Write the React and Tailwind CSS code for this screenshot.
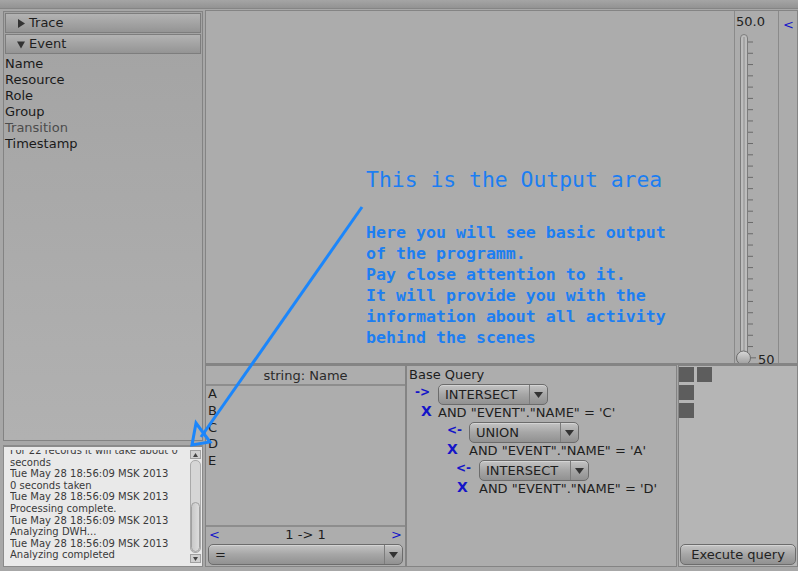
import React from 'react';

const blue = 'text-[#1414c8]';

const Caret = () => (
  <svg width="9" height="6" viewBox="0 0 9 6">
    <path d="M0 0H9L4.5 6Z" fill="#333" />
  </svg>
);

const Combo = ({ label, className = '' }) => (
  <div
    className={`flex items-stretch rounded-[5px] border border-[#6c6c6c] bg-gradient-to-b from-[#c4c4c4] via-[#a6a6a6] to-[#919191] shadow-[inset_0_1px_0_#d4d4d4] ${className}`}
  >
    <span className="flex-1 flex items-center pl-[6px] text-[13px] text-[#1e1e1e]">{label}</span>
    <span className="w-[18px] flex items-center justify-center border-l border-[#7c7c7c]">
      <Caret />
    </span>
  </div>
);

const Header = ({ open, label }) => (
  <div className="h-[20px] mx-[1px] mt-[1px] flex items-center gap-[4px] pl-[11px] border border-[#7d7d7d] bg-gradient-to-b from-[#b3b3b3] to-[#949494] text-[13px] text-[#1e1e1e]">
    <svg width="8" height="9" viewBox="0 0 8 9">
      {open ? <path d="M0 1.5H8L4 8.5Z" fill="#333" /> : <path d="M1 0V9L8 4.5Z" fill="#333" />}
    </svg>
    <span>{label}</span>
  </div>
);

const fields = ['Name', 'Resource', 'Role', 'Group', 'Transition', 'Timestamp'];

const logLines = [
  'For 22 records it will take about 0',
  'seconds',
  'Tue May 28 18:56:09 MSK 2013',
  '0 seconds taken',
  'Tue May 28 18:56:09 MSK 2013',
  'Processing complete.',
  'Tue May 28 18:56:09 MSK 2013',
  'Analyzing DWH...',
  'Tue May 28 18:56:09 MSK 2013',
  'Analyzing completed',
];

const outputLines = [
  'Here you will see basic output',
  'of the programm.',
  'Pay close attention to it.',
  'It will provide you with the',
  'information about all activity',
  'behind the scenes',
];

const Slider = () => {
  const ticks = [];
  for (let i = 0; i <= 28; i++) ticks.push(41 + i * 11.28);
  return (
    <svg width="44" height="352" viewBox="0 0 44 352" className="absolute left-0 top-0">
      <rect x="5.5" y="23.5" width="7" height="331" rx="3.5" fill="#bdbdbd" stroke="#7c7c7c" />
      <line x1="9" y1="26" x2="9" y2="350" stroke="#8e8e8e" />
      {ticks.map((y, i) => (
        <line key={i} x1="13" y1={y - 10} x2={i === 28 ? 21 : 18} y2={y - 10} stroke="#6a6a6a" />
      ))}
      <circle cx="8.5" cy="347" r="7" fill="url(#knob)" stroke="#6c6c6c" />
      <defs>
        <linearGradient id="knob" x1="0" y1="0" x2="0" y2="1">
          <stop offset="0" stopColor="#d8d8d8" />
          <stop offset="1" stopColor="#9a9a9a" />
        </linearGradient>
      </defs>
    </svg>
  );
};

const QueryLevel = ({ arrow, arrowPad, comboPad, xPad, op, value }) => (
  <div className="flex flex-col mt-[1px]">
    <div className="flex items-center h-[21px]">
      <span className={`${blue} font-bold text-[12px] leading-none -mt-[6px]`} style={{ marginLeft: arrowPad, width: comboPad - arrowPad }}>
        {arrow}
      </span>
      <Combo label={op} className="w-[110px] h-[21px]" />
    </div>
    <div className="flex items-center h-[16px]">
      <span className={`${blue} font-bold text-[14px] leading-none -mt-[4px]`} style={{ marginLeft: xPad, width: comboPad - xPad }}>
        X
      </span>
      <span className="text-[13px] text-[#1e1e1e]">AND "EVENT"."NAME" = '{value}'</span>
    </div>
  </div>
);

export default function App() {
  return (
    <div className="relative w-[798px] h-[571px] overflow-hidden flex flex-col bg-[#a7a7a7] font-['DejaVu_Sans','Liberation_Sans',sans-serif] text-[#1e1e1e]">
      <div className="h-[9px] bg-gradient-to-b from-[#a5a5a5] to-[#939393] border-b border-[#858585]" />

      <div className="flex flex-1 min-h-0">
        {/* left column */}
        <div className="w-[203px] flex flex-col pl-[3px] pt-[2px] pb-[4px]">
          <div className="h-[430px] flex flex-col border border-[#838383] bg-gradient-to-b from-[#a3a3a3] to-[#b1b1b1]">
            <Header label="Trace" />
            <Header open label="Event" />
            <div className="pt-[2px] pl-[1px] flex flex-col text-[13px] leading-[16px]">
              {fields.map((f) => (
                <span key={f} className={f === 'Transition' ? 'text-[#4c4c4c]' : 'text-[#1a1a1a]'}>
                  {f}
                </span>
              ))}
            </div>
          </div>
          <div className="h-[4px]" />
          <div className="flex-1 flex border border-[#8a8a8a] border-t-[2px] bg-[#e9e9e9] min-h-0">
            <div className="flex-1 flex flex-col pt-[3px] pl-[6px] min-w-0">
              <div className="flex-1 overflow-hidden">
                <div className="-mt-[5px] flex flex-col text-[10px] leading-[11.6px] text-[#3a3a3a] whitespace-nowrap">
                  {logLines.map((l, i) => (
                    <span key={i}>{l}</span>
                  ))}
                </div>
              </div>
            </div>
            <div className="w-[11px] mr-[1px] flex flex-col py-[3px] gap-[1px]">
              <div className="h-[9px] flex items-center justify-center border border-[#a0a0a0] bg-[#d0d0d0]">
                <svg width="5" height="4" viewBox="0 0 5 4"><path d="M0 4H5L2.5 0Z" fill="#444" /></svg>
              </div>
              <div className="flex-1 flex flex-col rounded-[5px] border border-[#a9a9a9] bg-[#d6d6d6]">
                <div className="flex-1" />
                <div className="h-[50px] rounded-[5px] border border-[#a0a0a0] bg-gradient-to-r from-[#c9c9c9] to-[#dcdcdc]" />
              </div>
              <div className="h-[9px] flex items-center justify-center border border-[#a0a0a0] bg-[#d0d0d0]">
                <svg width="5" height="4" viewBox="0 0 5 4"><path d="M0 0H5L2.5 4Z" fill="#444" /></svg>
              </div>
            </div>
          </div>
        </div>

        <div className="w-[2px]" />

        {/* right column */}
        <div className="flex-1 flex flex-col pt-[1px]">
          <div className="h-[355px] flex border border-[#848484] border-b-[2px] bg-[#acacac]">
            <div className="flex-1 pl-[160px] pt-[156px] font-['DejaVu_Sans_Mono','Liberation_Mono',monospace] text-[#1c7ef2] whitespace-pre">
              <div className="text-[21.4px] leading-[25px]">This is the Output area</div>
              <div className="mt-[30px] flex flex-col text-[16.6px] leading-[21px] font-bold">
                {outputLines.map((l) => (
                  <span key={l}>{l}</span>
                ))}
              </div>
            </div>
            <div className="relative w-[44px] border-l border-[#8a8a8a]">
              <span className="absolute left-[1px] top-[1px] text-[13px] text-[#222]">50.0</span>
              <Slider />
              <span className="absolute left-[23px] top-[339px] text-[13px] text-[#222]">50</span>
            </div>
            <div className="w-[19px] border-l border-[#8a8a8a] pl-[4px] pt-[1px]">
              <span className={`${blue} text-[13px]`}>&lt;</span>
            </div>
          </div>

          <div className="flex-1 flex pb-[4px]">
            {/* column filter */}
            <div className="w-[201px] flex flex-col border border-[#848484] bg-[#adadad]">
              <div className="h-[20px] pt-[1px] flex items-center justify-center border-b-[2px] border-[#8d8d8d] text-[13px] text-[#2a2a2a]">
                string: Name
              </div>
              <div className="flex-1 pl-[2px] flex flex-col text-[13px] leading-[16.75px] text-[#1e1e1e]">
                {['A', 'B', 'C', 'D', 'E'].map((v) => (
                  <span key={v}>{v}</span>
                ))}
              </div>
              <div className="h-[18px] flex items-center justify-between px-[3px] border-t-[2px] border-[#8d8d8d] text-[13px]">
                <span className={blue}>&lt;</span>
                <span className="text-[#1e1e1e]">1 -&gt; 1</span>
                <span className={blue}>&gt;</span>
              </div>
              <div className="px-[2px] pb-[1px] pt-[1px]">
                <Combo label="=" className="h-[21px]" />
              </div>
            </div>

            {/* base query */}
            <div className="w-[271px] flex flex-col border border-[#848484] bg-[#adadad] pl-[2px] pt-[1px]">
              <span className="text-[13px] leading-[16px] text-[#1e1e1e]">Base Query</span>
              <QueryLevel arrow="->" arrowPad={6} xPad={12} comboPad={29} op="INTERSECT" value="C" />
              <QueryLevel arrow="<-" arrowPad={38} xPad={38} comboPad={60} op="UNION" value="A" />
              <QueryLevel arrow="<-" arrowPad={47} xPad={48} comboPad={70} op="INTERSECT" value="D" />
            </div>

            <div className="w-[1px]" />

            {/* results */}
            <div className="w-[120px] flex flex-col border border-[#848484] bg-[#b5b5b5]">
              <div className="flex-1 pt-[1px] flex flex-col gap-[3px]">
                <div className="flex gap-[3px]">
                  <div className="w-[15px] h-[15px] bg-[#5d5d5d]" />
                  <div className="w-[15px] h-[15px] bg-[#5d5d5d]" />
                </div>
                <div className="w-[15px] h-[15px] bg-[#5d5d5d]" />
                <div className="w-[15px] h-[15px] bg-[#5d5d5d]" />
              </div>
              <div className="px-[1px] pb-[1px]">
                <div className="h-[21px] flex items-center justify-center rounded-[5px] border border-[#6c6c6c] bg-gradient-to-b from-[#c4c4c4] via-[#a6a6a6] to-[#919191] shadow-[inset_0_1px_0_#d4d4d4] text-[13px] text-[#222]">
                  Execute query
                </div>
              </div>
            </div>
          </div>
        </div>
      </div>

      {/* annotation arrow */}
      <svg className="absolute left-0 top-0 pointer-events-none" width="798" height="571" viewBox="0 0 798 571">
        <line x1="362" y1="207" x2="201" y2="437" stroke="#1b86fb" strokeWidth="3" />
        <path d="M196 423L192 445L210 442Z" fill="none" stroke="#1b86fb" strokeWidth="3" strokeLinejoin="miter" />
      </svg>
    </div>
  );
}
